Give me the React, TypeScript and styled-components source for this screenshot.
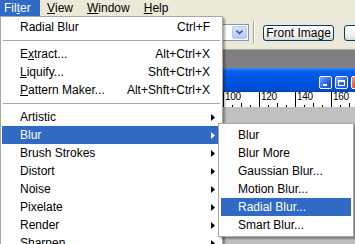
import React from 'react'
import styled, { createGlobalStyle } from 'styled-components'

const GlobalStyle = createGlobalStyle`
  html, body {
    margin: 0;
    padding: 0;
    background: #808080;
  }
  body {
    font-family: 'Liberation Sans', Arial, sans-serif;
    font-size: 12px;
    color: #000;
  }
`

const Page = styled.div`
  position: relative;
  width: 355px;
  height: 244px;
  overflow: hidden;
  background: #808080;
  display: flex;
  flex-direction: column;
`

const MenuBar = styled.div`
  height: 16px;
  background: #ece9d8;
  display: flex;
  align-items: stretch;
  flex-shrink: 0;
`

const MenuBarItem = styled.div<{ $active?: boolean; $first?: boolean }>`
  display: flex;
  align-items: center;
  padding: 0 7px 0 ${(p) => (p.$first ? '4px' : '7px')};
  min-width: ${(p) => (p.$first ? '29px' : 'auto')};
  background: ${(p) => (p.$active ? '#316ac5' : 'transparent')};
  color: ${(p) => (p.$active ? '#fff' : '#000')};
  line-height: 16px;
`

const Toolbar = styled.div`
  height: 33px;
  background: #ece9d8;
  border-bottom: 1px solid #aca899;
  display: flex;
  align-items: center;
  padding-left: 129px;
  flex-shrink: 0;
  overflow: hidden;
  & > * {
    flex-shrink: 0;
  }
`

const Combo = styled.div`
  width: 120px;
  height: 17px;
  box-sizing: border-box;
  border: 1px solid #7f9db9;
  background: #fff;
  display: flex;
  justify-content: flex-end;
  padding: 1px;
`

const ComboArrow = styled.div`
  width: 15px;
  height: 13px;
  box-sizing: border-box;
  border: 1px solid #b9c9ef;
  border-radius: 2px;
  background: linear-gradient(#d5e2fd, #b6cbf8);
  display: flex;
  align-items: center;
  justify-content: center;
`

const ToolSep = styled.div`
  width: 1px;
  height: 23px;
  margin-left: 4px;
  background: #aca899;
  border-right: 1px solid #fff;
`

const PushButton = styled.div<{ $w: number; $gap: number }>`
  width: ${(p) => p.$w}px;
  height: 16px;
  box-sizing: border-box;
  margin-left: ${(p) => p.$gap}px;
  border: 1px solid #003c74;
  border-radius: 3px;
  background: linear-gradient(#ffffff, #f0f0ea 70%, #dcd9cc);
  display: flex;
  align-items: center;
  justify-content: center;
  font-size: 12px;
  line-height: 14px;
`

const Workspace = styled.div`
  flex: 1;
  padding: 18px 0 0 222px;
`

const DocWindow = styled.div`
  width: 147px;
  height: 200px;
  background: #c0c0c0;
  display: flex;
  flex-direction: column;
`

const TitleBar = styled.div`
  height: 24px;
  box-sizing: border-box;
  background: linear-gradient(#3b8cff 0%, #0a5fea 12%, #0054e3 50%, #0050d8 85%, #003fb8 100%);
  display: flex;
  justify-content: flex-end;
  align-items: flex-end;
  gap: 3px;
  padding: 0 5px 3px 0;
`

const WinButton = styled.div<{ $close?: boolean }>`
  width: 13px;
  height: 13px;
  box-sizing: border-box;
  border: 1px solid #fff;
  border-radius: 2px;
  background: ${(p) =>
    p.$close
      ? 'linear-gradient(135deg, #f09a7d, #e0502e 60%, #c23a1a)'
      : 'linear-gradient(135deg, #7aa6ff, #2a62e0 60%, #1a4fcf)'};
  display: flex;
  align-items: center;
  justify-content: center;
`

const MinGlyph = styled.div`
  width: 4px;
  height: 2px;
  background: #fff;
  margin-top: 5px;
  margin-right: 2px;
`

const MaxGlyph = styled.div`
  width: 7px;
  height: 6px;
  box-sizing: border-box;
  border: 1px solid #fff;
  border-top-width: 2px;
`

const Ruler = styled.div`
  height: 15px;
  background: #fff;
  display: flex;
  border-left: 1px solid #404040;
`

const RulerSeg = styled.div`
  width: 36px;
  flex-shrink: 0;
  box-sizing: border-box;
  border-left: 1px solid #000;
  display: flex;
  flex-direction: column;
  justify-content: space-between;
`

const RulerNum = styled.span`
  font-size: 10px;
  line-height: 10px;
  padding-left: 1px;
  letter-spacing: -0.3px;
`

const DropMenu = styled.div<{ $left: number; $top: number; $width: number }>`
  position: absolute;
  left: ${(p) => p.$left}px;
  top: ${(p) => p.$top}px;
  width: ${(p) => p.$width}px;
  box-sizing: border-box;
  background: #fff;
  border: 1px solid #aca899;
  box-shadow: 2px 2px 2px rgba(0, 0, 0, 0.35);
`

const MainMenu = styled(DropMenu)`
  padding: 1px 2px 2px 1px;
`

const SubMenu = styled(DropMenu)`
  padding: 2px;
`

const MenuRow = styled.div<{ $active?: boolean; $indent: number }>`
  height: 18px;
  display: grid;
  grid-template-columns: 1fr auto 10px;
  align-items: center;
  padding-left: ${(p) => p.$indent}px;
  background: ${(p) => (p.$active ? '#316ac5' : 'transparent')};
  color: ${(p) => (p.$active ? '#fff' : '#000')};
  white-space: nowrap;
  line-height: 18px;
`

const Separator = styled.div`
  height: 9px;
  display: flex;
  align-items: center;
  margin-left: 1px;
  &::after {
    content: '';
    flex: 1;
    height: 1px;
    background: #aca899;
  }
`

const Arrow = ({ color }: { color: string }) => (
  <svg width="10" height="7" viewBox="0 0 10 7">
    <polygon points="1,0 5,3.5 1,7" fill={color} />
  </svg>
)

const Ticks = () => (
  <svg width="35" height="5" viewBox="0 0 35 5">
    <rect x="8" y="3" width="1" height="2" fill="#000" />
    <rect x="17" y="1" width="1" height="4" fill="#000" />
    <rect x="26" y="3" width="1" height="2" fill="#000" />
  </svg>
)

type Item =
  | { sep: true }
  | { sep?: false; pre: string; key?: string; post?: string; shortcut?: string; sub?: boolean; active?: boolean }

const filterItems: Item[] = [
  { pre: 'Radial Blur', shortcut: 'Ctrl+F' },
  { sep: true },
  { pre: 'E', key: 'x', post: 'tract...', shortcut: 'Alt+Ctrl+X' },
  { pre: '', key: 'L', post: 'iquify...', shortcut: 'Shft+Ctrl+X' },
  { pre: '', key: 'P', post: 'attern Maker...', shortcut: 'Alt+Shft+Ctrl+X' },
  { sep: true },
  { pre: 'Artistic', sub: true },
  { pre: 'Blur', sub: true, active: true },
  { pre: 'Brush Strokes', sub: true },
  { pre: 'Distort', sub: true },
  { pre: 'Noise', sub: true },
  { pre: 'Pixelate', sub: true },
  { pre: 'Render', sub: true },
  { pre: 'Sharpen', sub: true },
]

const blurItems = ['Blur', 'Blur More', 'Gaussian Blur...', 'Motion Blur...', 'Radial Blur...', 'Smart Blur...']

export default function App() {
  return (
    <>
      <GlobalStyle />
      <Page>
        <MenuBar>
          <MenuBarItem $first $active>
            Fil<u>t</u>er
          </MenuBarItem>
          <MenuBarItem>
            <u>V</u>iew
          </MenuBarItem>
          <MenuBarItem>
            <u>W</u>indow
          </MenuBarItem>
          <MenuBarItem>
            <u>H</u>elp
          </MenuBarItem>
        </MenuBar>
        <Toolbar>
          <Combo>
            <ComboArrow>
              <svg width="7" height="5" viewBox="0 0 7 5">
                <polyline points="0.5,0.5 3.5,3.5 6.5,0.5" fill="none" stroke="#4d6185" strokeWidth="1.6" />
              </svg>
            </ComboArrow>
          </Combo>
          <ToolSep />
          <PushButton $w={71} $gap={8}>Front Image</PushButton>
          <PushButton $w={72} $gap={10}></PushButton>
        </Toolbar>
        <Workspace>
          <DocWindow>
            <TitleBar>
              <WinButton>
                <MinGlyph />
              </WinButton>
              <WinButton>
                <MaxGlyph />
              </WinButton>
              <WinButton $close />
            </TitleBar>
            <Ruler>
              {[100, 120, 140, 160].map((n) => (
                <RulerSeg key={n}>
                  <RulerNum>{n}</RulerNum>
                  <Ticks />
                </RulerSeg>
              ))}
            </Ruler>
          </DocWindow>
        </Workspace>

        <MainMenu $left={0} $top={16} $width={223}>
          {filterItems.map((it, i) =>
            it.sep ? (
              <Separator key={i} />
            ) : (
              <MenuRow key={i} $active={it.active} $indent={18}>
                <span>
                  {it.pre}
                  {it.key && <u>{it.key}</u>}
                  {it.post}
                </span>
                <span>{it.shortcut}</span>
                <span>{it.sub && <Arrow color={it.active ? '#fff' : '#000'} />}</span>
              </MenuRow>
            )
          )}
        </MainMenu>

        <SubMenu $left={218} $top={123} $width={136}>
          {blurItems.map((label) => (
            <MenuRow key={label} $active={label === 'Radial Blur...'} $indent={17}>
              <span>{label}</span>
              <span />
              <span />
            </MenuRow>
          ))}
        </SubMenu>
      </Page>
    </>
  )
}
